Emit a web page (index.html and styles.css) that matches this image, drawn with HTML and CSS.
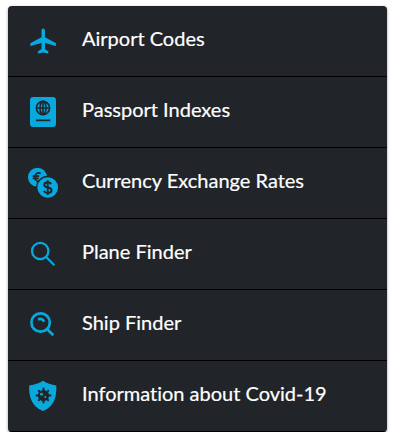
FILE: index.html
```html
<!DOCTYPE html>
<html lang="en">
<head>
<meta charset="utf-8">
<title>Travel tools</title>
<link rel="stylesheet" href="styles.css">
</head>
<body>
<ul class="menu">
  <li class="item">
    <svg class="icon" viewBox="0 0 32 32"><path d="M16.200 3.600c-1.200 0-1.700 1.200-1.700 2.600v6L3.300 18.300v2.600l11.200-3v6l-3.600 2.600v2l5.300-1.100 5.100 1.100v-2L18 23.900v-6l11 3v-2.600L18 12.200v-6c0-1.400-.6-2.600-1.800-2.600z"/></svg>
    <span class="label">Airport Codes</span>
  </li>
  <li class="item">
    <svg class="icon" viewBox="0 0 32 32"><rect x="3" y="1" width="26" height="30" rx="3.300"/><g class="cut"><circle cx="16" cy="12" r="6.600"/><ellipse cx="16" cy="12" rx="3" ry="6.600"/><path d="M9.500 12h13M16 5.500v13M9 24.400h14.300"/></g></svg>
    <span class="label">Passport Indexes</span>
  </li>
  <li class="item">
    <svg class="icon" viewBox="0 0 32 32"><circle cx="10.500" cy="10.300" r="9.500"/><path class="euro" d="M13.700 6.400c-3.700-1.600-5.700.9-5.700 3.900 0 3.400 2.700 5 5.500 3.600M5.700 9.100h6.500M5.700 11.400h6"/><circle class="coin" cx="20.700" cy="20.500" r="11"/><path class="dollar" d="M24.200 17.100c-.9-1.300-2.100-1.800-3.500-1.800-2.100 0-3.400 1.100-3.400 2.600 0 3.600 7.300 1.700 7.300 5.300 0 1.700-1.600 2.700-3.800 2.700-1.800 0-3.200-.7-4-2M20.700 13.200v14.800"/></svg>
    <span class="label">Currency Exchange Rates</span>
  </li>
  <li class="item">
    <svg class="icon line" viewBox="0 0 32 32"><circle cx="13.200" cy="13" r="8.200"/><path d="M19 18.800l8.300 8.400"/></svg>
    <span class="label">Plane Finder</span>
  </li>
  <li class="item">
    <svg class="icon line bold" viewBox="0 0 32 32"><circle cx="13.600" cy="13.500" r="9.200"/><path d="M20 20l6.300 6.200M11 10.400c2.800-1.100 5.200 0 6 2.300"/></svg>
    <span class="label">Ship Finder</span>
  </li>
  <li class="item">
    <svg class="icon" viewBox="0 0 32 32"><path d="M16 .8c4 2.500 8 4 13.300 4.700.4 10.500-1.300 20.500-13.300 25.500C4 26 1.700 16 2.200 5.500 8 4.800 12 3.300 16 .8z"/><g class="virus"><circle cx="16.500" cy="15.500" r="4.600"/><path d="M16.500 7.700v15.600M8.700 15.500h15.600M11.200 10.200l10.600 10.600M21.800 10.200l-10.600 10.600"/></g><circle cx="14.500" cy="14.200" r="1.400"/><circle cx="18.300" cy="17" r="1"/></svg>
    <span class="label">Information about Covid-19</span>
  </li>
</ul>
</body>
</html>
```

FILE: styles.css
```css
body {
  margin: 0;
  background: #fff;
  font-family: Lato, sans-serif;
}

.menu {
  list-style: none;
  width: 379px;
  margin: 6px 0 0 8px;
  padding: 0;
  overflow: hidden;
  border-radius: 4px;
  background: #212529;
  box-shadow: 0 1px 3px rgba(0, 0, 0, 0.4);
}

.item {
  display: flex;
  align-items: center;
  gap: 31px;
  box-sizing: border-box;
  height: 71px;
  padding-left: 19px;
  border-bottom: 1px solid #000;
}

.icon {
  width: 32px;
  height: 32px;
  margin-right: -8px;
  flex: none;
  fill: #08a9df;
}

.icon .cut,
.icon .euro,
.icon .dollar {
  fill: none;
  stroke: #212529;
  stroke-width: 1.6;
}

.icon .dollar {
  stroke-width: 1.9;
}

.icon .coin {
  stroke: #212529;
  stroke-width: 1.3;
}

.icon .virus {
  fill: #212529;
  stroke: #212529;
  stroke-width: 2;
}

.line {
  fill: none;
  stroke: #08a9df;
  stroke-width: 2.2;
}

.bold {
  stroke-width: 2.7;
}

.label {
  padding-bottom: 6px;
  color: #fff;
  font-size: 20px;
  line-height: 28px;
  font-variant-ligatures: none;
  -webkit-text-stroke: 0.2px #fff;
}
```
